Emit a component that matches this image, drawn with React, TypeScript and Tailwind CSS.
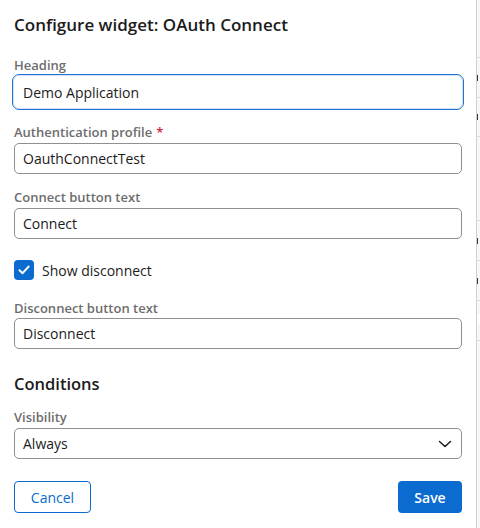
import React from "react";

const font = { fontFamily: '"Open Sans", "Noto Sans", sans-serif' };

function Label({ children, required }: { children: React.ReactNode; required?: boolean }) {
  return (
    <div className="text-[13px] font-semibold leading-[18px] text-[#6d6d6d]">
      {children}
      {required && <span className="ml-1 text-[#d3273e]">*</span>}
    </div>
  );
}

function TextInput({ value, focused }: { value: string; focused?: boolean }) {
  if (focused) {
    return (
      <div className="-mx-[2px] flex h-[36px] items-center rounded-[7px] border border-[#1f72d4] bg-white pl-[10px] text-[14px] text-[#1b1b1b] shadow-[inset_0_0_0_1px_#d3e4f8]">
        {value}
      </div>
    );
  }
  return (
    <div className="flex h-[31px] items-center rounded-[5px] border border-[#8f8f8f] bg-white pl-[8px] text-[14px] text-[#1b1b1b]">
      {value}
    </div>
  );
}

// sliver of the page behind the dialog
function BgRow({ h, mark }: { h: string; mark?: boolean }) {
  return (
    <div className={`flex items-center border-b border-[#dcdcdc] ${h}`}>
      {mark && <span className="h-[6px] w-[1px] bg-[#333333]" />}
    </div>
  );
}

export default function App() {
  return (
    <div className="flex h-[528px] w-[480px] overflow-hidden bg-white" style={font}>
      <div className="flex w-[476px] flex-col px-[14px] pt-[11px]">
        <h1 className="text-[17px] font-semibold leading-[28px] text-[#1b1b1b]">
          Configure widget: OAuth Connect
        </h1>

        <div className="mt-[17px]">
          <Label>Heading</Label>
          <TextInput value="Demo Application" focused />
        </div>

        <div className="mt-[13px]">
          <Label required>Authentication profile</Label>
          <div className="mt-[2px]">
            <TextInput value="OauthConnectTest" />
          </div>
        </div>

        <div className="mt-[14px]">
          <Label>Connect button text</Label>
          <div className="mt-[2px]">
            <TextInput value="Connect" />
          </div>
        </div>

        <label className="mt-[21px] flex h-[20px] items-center gap-[8px] text-[14px] text-[#1b1b1b]">
          <span className="flex h-[20px] w-[20px] items-center justify-center rounded-[4px] bg-[#0b6bcf]">
            <svg width="14" height="14" viewBox="0 0 14 14" fill="none">
              <path d="M2.5 7.2 5.6 10.2 11.6 3.6" stroke="white" strokeWidth="2" strokeLinecap="round" strokeLinejoin="round" />
            </svg>
          </span>
          Show disconnect
        </label>

        <div className="mt-[19px]">
          <Label>Disconnect button text</Label>
          <div className="mt-[1px]">
            <TextInput value="Disconnect" />
          </div>
        </div>

        <h2 className="mt-[23px] text-[16.5px] font-semibold leading-[24px] text-[#1b1b1b]">Conditions</h2>

        <div className="mt-[12px]">
          <Label>Visibility</Label>
          <div className="mt-[2px] flex h-[31px] items-center justify-between rounded-[5px] border border-[#8f8f8f] bg-white pl-[8px] pr-[9px] text-[14px] text-[#1b1b1b]">
            Always
            <svg width="14" height="14" viewBox="0 0 14 14" fill="none">
              <path d="M1.5 4.5 7 9.5 12.5 4.5" stroke="#1b1b1b" strokeWidth="1.5" strokeLinecap="round" strokeLinejoin="round" />
            </svg>
          </div>
        </div>

        <div className="mt-[22px] flex items-center justify-between">
          <button className="flex h-[32px] w-[77px] items-center justify-center rounded-[4px] border border-[#0b6bcf] bg-white text-[14px] text-[#0b6bcf]">
            Cancel
          </button>
          <button className="flex h-[32px] w-[64px] items-center justify-center rounded-[4px] bg-[#0b6bcf] text-[14px] font-semibold text-white">
            Save
          </button>
        </div>
      </div>

      <div className="w-[1px] bg-[#d0d0d0]" />
      <div className="flex w-[3px] flex-col bg-[#f7f7f7]">
        <BgRow h="h-[58px]" />
        <BgRow h="h-[40px]" mark />
        <BgRow h="h-[39px]" mark />
        <BgRow h="h-[84px]" />
        <BgRow h="h-[40px]" mark />
        <BgRow h="h-[40px]" mark />
        <div className="h-[13px]" />
        <div className="h-[10px] bg-white" />
        <BgRow h="h-[17px]" />
        <div className="flex-1" />
      </div>
    </div>
  );
}
